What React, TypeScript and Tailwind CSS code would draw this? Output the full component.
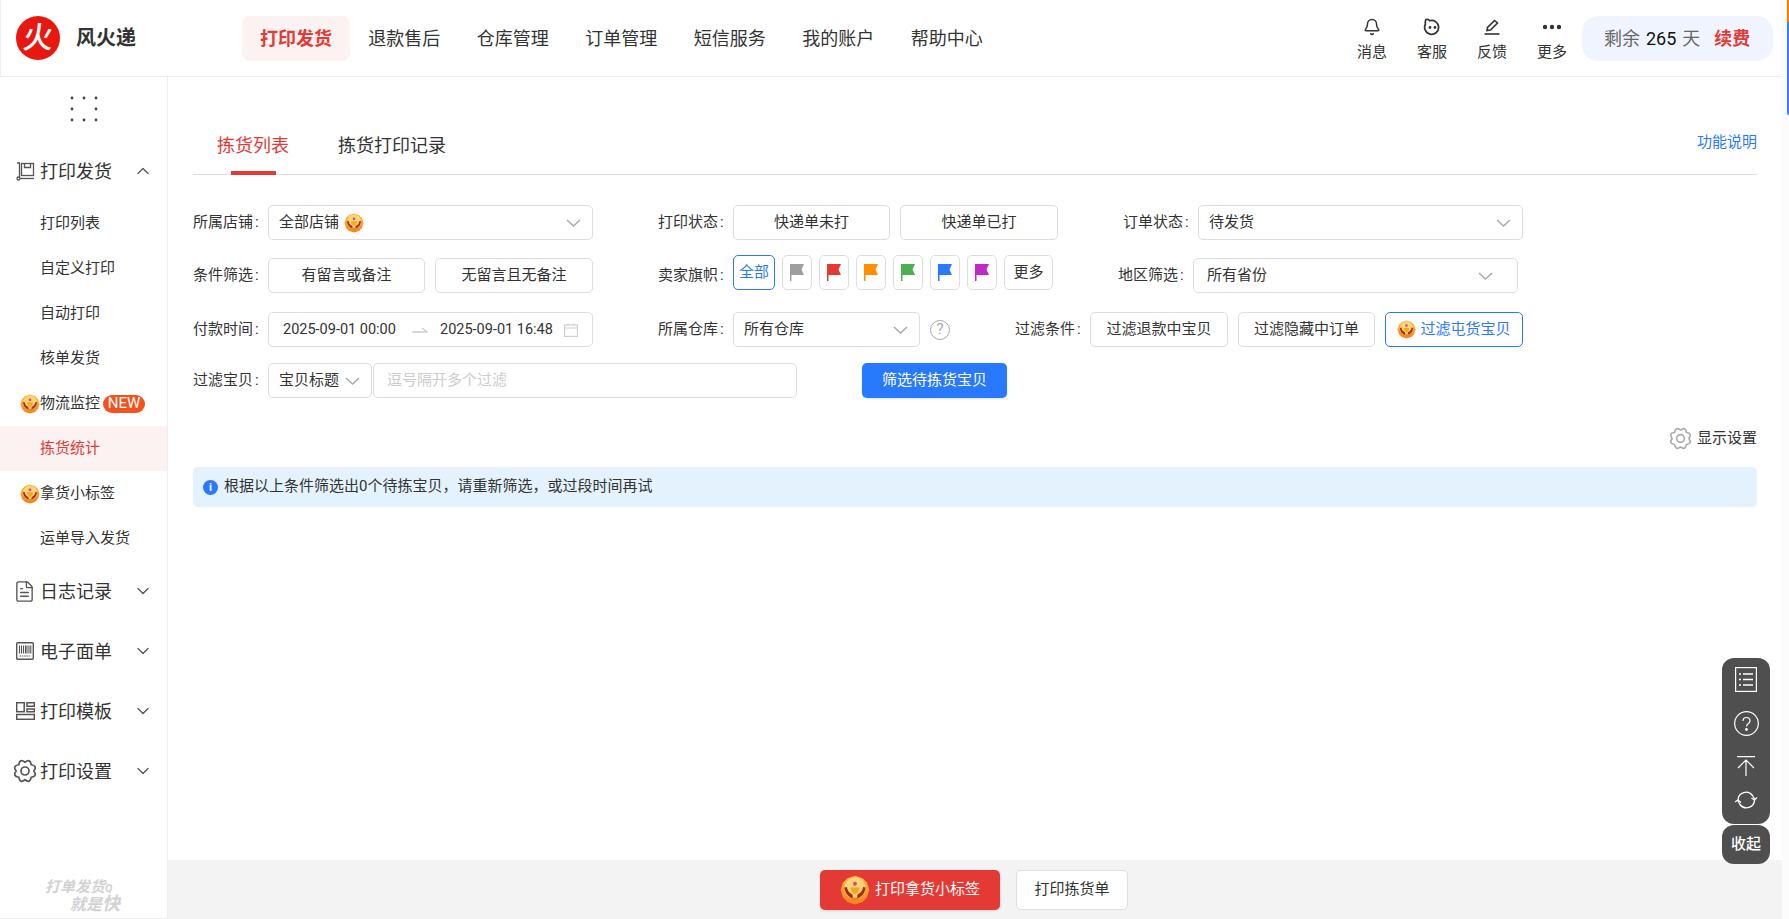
import { Bell, ChevronDown, ChevronUp, FileText } from "lucide-react";

const navItems = ["退款售后", "仓库管理", "订单管理", "短信服务", "我的账户", "帮助中心"];
const flagColors = ["#9e9e9e", "#e53935", "#ff8f00", "#4caf50", "#2979ff", "#c128c8"];

function gearPath(lobes: number, control: number, inner: number) {
  let d = "";
  for (let i = 0; i < lobes; i++) {
    const a0 = (i / lobes) * Math.PI * 2;
    const a1 = ((i + 0.5) / lobes) * Math.PI * 2;
    const a2 = ((i + 1) / lobes) * Math.PI * 2;
    const p = (r: number, a: number) => `${(12 + r * Math.cos(a)).toFixed(2)} ${(12 + r * Math.sin(a)).toFixed(2)}`;
    if (i === 0) d += `M${p(inner, a0)}`;
    d += `Q${p(control, a1)} ${p(inner, a2)}`;
  }
  return d + "Z";
}

function Gear({ size, color }: { size: number; color: string }) {
  return (
    <svg width={size} height={size} viewBox="0 0 24 24" fill="none" stroke={color} strokeWidth="1.700">
      <path d={gearPath(8, 13.800, 8.800)} />
      <circle cx="12" cy="12" r="4" />
    </svg>
  );
}

function Medal({ size }: { size: number }) {
  return (
    <svg width={size} height={size} viewBox="0 0 24 24" className="shrink-0">
      <defs>
        <linearGradient id="medal-bg" x1="0" y1="0" x2="0" y2="1">
          <stop offset="0" stopColor="#f8c04a" />
          <stop offset="1" stopColor="#f5821f" />
        </linearGradient>
      </defs>
      <path d="M12 0.500l6 2 3.500 3.500 2 6-2 6-3.500 3.500-6 2-6-2-3.500-3.500-2-6 2-6L6 2.500z" fill="url(#medal-bg)" />
      <circle cx="12" cy="10.500" r="8.500" fill="#fcd574" />
      <path d="M3.500 10c.5 4.500 3 7.500 7 9l-.5-3.500C7.500 14.500 6 12.500 5.500 9.500z" fill="#a8281c" />
      <path d="M20.500 10c-.5 4.500-3 7.500-7 9l.5-3.500c2.500-1 4-3 4.500-6z" fill="#a8281c" />
      <path d="M8.500 10h7c0 3-1.500 5-3.500 5.500C10 15 8.500 13 8.500 10z" fill="#f5a623" />
      <rect x="9" y="18" width="6" height="2" rx="1" fill="#e8871e" />
      <circle cx="12" cy="7" r="1.600" fill="#e83e8c" />
    </svg>
  );
}

function Chevron({ color = "#aaa" }: { color?: string }) {
  return (
    <svg width="15" height="8" viewBox="0 0 15 8" fill="none" stroke={color} strokeWidth="1.500" className="shrink-0">
      <path d="M1 1l6.500 6L14 1" />
    </svg>
  );
}

function Select({ width, text, pad = "pl-[10px] pr-[11px]", children }: { width: string; text: string; pad?: string; children?: React.ReactNode }) {
  return (
    <div className={`${width} ${pad} flex h-[35px] shrink-0 items-center justify-between rounded-[5px] border border-[#ddd] bg-white`}>
      <span className="flex items-center gap-[5px]">
        {text}
        {children}
      </span>
      <Chevron />
    </div>
  );
}

function Btn({ width, text, active }: { width: string; text: string; active?: boolean }) {
  return (
    <div
      className={`${width} flex h-[35px] shrink-0 items-center justify-center rounded-[5px] border bg-white ${
        active ? "border-[#2979ff] text-[#2979ff]" : "border-[#ddd]"
      }`}
    >
      {text}
    </div>
  );
}

function Label({ text }: { text: string }) {
  return (
    <div className="w-[75px] shrink-0">
      {text}
      <span className="ml-[2px]">:</span>
    </div>
  );
}

function SubItem({ text, medal, active, children }: { text: string; medal?: boolean; active?: boolean; children?: React.ReactNode }) {
  return (
    <div className={`flex h-[45px] items-center text-[15px] ${active ? "bg-[#fdf2f2] text-[#e53935]" : ""} ${medal ? "pl-[20px]" : "pl-[40px]"}`}>
      {medal && <Medal size={20} />}
      <span>{text}</span>
      {children}
    </div>
  );
}

function Group({ icon, text, open }: { icon: React.ReactNode; text: string; open?: boolean }) {
  return (
    <div className="flex h-[60px] items-center pl-[16px] pr-[14px] text-[18px]">
      <div className="flex w-[24px] shrink-0 items-center">{icon}</div>
      <span className="flex-1">{text}</span>
      {open ? <ChevronUp size={20} color="#555" strokeWidth={1.500} /> : <ChevronDown size={20} color="#555" strokeWidth={1.500} />}
    </div>
  );
}

function TopIcon({ icon, text }: { icon: React.ReactNode; text: string }) {
  return (
    <div className="flex w-[60px] flex-col items-center">
      <div className="flex h-[24px] items-center justify-center">{icon}</div>
      <div className="mt-[3px] text-[15px] leading-[20px]">{text}</div>
    </div>
  );
}

export default function App() {
  return (
    <div className="flex h-[919px] w-[1789px] overflow-hidden bg-white font-[Roboto,'Noto_Sans_CJK_SC',sans-serif] text-[15px] text-[#333]">
      <div className="relative flex w-[1782px] flex-col">
        {/* top bar */}
        <header className="flex h-[77px] shrink-0 items-center border-b border-l border-[#eee]">
          <div className="ml-[15px] flex h-[44px] w-[44px] items-center justify-center rounded-full bg-[#e8170f]">
            <span className="-skew-x-6 text-[30px] leading-none font-medium text-white">火</span>
          </div>
          <div className="ml-[16px] w-[166px] text-[20px] font-bold">风火递</div>
          <div className="flex h-[45px] w-[108px] items-center justify-center rounded-[8px] bg-[#fdf2f2] text-[18px] font-bold text-[#e53935]">打印发货</div>
          {navItems.map((n) => (
            <div key={n} className="flex h-[45px] w-[108.500px] items-center justify-center text-[18px]">
              {n}
            </div>
          ))}
          <div className="ml-auto flex items-center pr-[9px]">
            <TopIcon text="消息" icon={<Bell size={18} strokeWidth={2} color="#333" />} />
            <TopIcon
              text="客服"
              icon={
                <svg width="18" height="18" viewBox="0 0 18 18" fill="none" stroke="#333" strokeWidth="1.700">
                  <path d="M3 1.500c2-.5 3 .3 3.500 1.200A7 7 0 1 1 2.500 6C2 4.500 2.200 3 3 1.500z" />
                  <circle cx="7" cy="9.500" r=".6" fill="#333" />
                  <circle cx="12" cy="9.500" r=".6" fill="#333" />
                </svg>
              }
            />
            <TopIcon
              text="反馈"
              icon={
                <svg width="18" height="18" viewBox="0 0 18 18" fill="none" stroke="#333" strokeWidth="1.600">
                  <path d="M4 12.500l.5-3L11.500 2.500 14.500 5 7.500 12z" />
                  <path d="M1.500 16h15" />
                </svg>
              }
            />
            <TopIcon
              text="更多"
              icon={
                <svg width="20" height="6" viewBox="0 0 20 6" fill="#333">
                  <circle cx="3" cy="3" r="2.200" />
                  <circle cx="10" cy="3" r="2.200" />
                  <circle cx="17" cy="3" r="2.200" />
                </svg>
              }
            />
            <div className="flex h-[45px] w-[191px] items-center rounded-[16px] bg-[#f0f4ff] pl-[22px] text-[18px] text-[#666]">
              <span>剩余</span>
              <span className="ml-[6px] text-[#111]">265</span>
              <span className="ml-[6px]">天</span>
              <span className="ml-[14px] font-bold text-[#e53935]">续费</span>
            </div>
          </div>
        </header>

        <div className="flex min-h-0 flex-1">
          {/* side menu */}
          <aside className="flex w-[168px] shrink-0 flex-col border-r border-b border-[#eee]">
            <div className="flex h-[64px] shrink-0 items-center justify-center">
              <svg width="28" height="26" viewBox="0 0 28 26" fill="#444">
                {[[2, 2], [14, 2], [26, 2], [2, 13], [26, 13], [2, 24], [14, 24], [26, 24]].map(([x, y]) => (
                  <circle key={`${x}-${y}`} cx={x} cy={y} r="1.400" />
                ))}
              </svg>
            </div>
            <Group
              open
              text="打印发货"
              icon={
                <svg width="19" height="19" viewBox="0 0 19 19" fill="none" stroke="#555" strokeWidth="1.300">
                  <path d="M1 1h2.500v14.500" />
                  <rect x="5.500" y="1.500" width="12" height="12" />
                  <path d="M8.500 1.500v4h6v-4" />
                  <circle cx="2.500" cy="16.500" r="1.500" />
                  <path d="M4 16.500h14" />
                </svg>
              }
            />
            <SubItem text="打印列表" />
            <SubItem text="自定义打印" />
            <SubItem text="自动打印" />
            <SubItem text="核单发货" />
            <SubItem text="物流监控" medal>
              <span className="ml-[3px] flex h-[18px] w-[42px] items-center justify-center rounded-full bg-[#f4511e] text-[15px] text-white">NEW</span>
            </SubItem>
            <SubItem text="拣货统计" active />
            <SubItem text="拿货小标签" medal />
            <SubItem text="运单导入发货" />
            <Group text="日志记录" icon={<FileText size={23} color="#555" strokeWidth={1.400} className="-ml-[3px] shrink-0" />} />
            <Group
              text="电子面单"
              icon={
                <svg width="18" height="18" viewBox="0 0 18 18" fill="none" stroke="#555" strokeWidth="1.400">
                  <rect x=".7" y=".7" width="16.600" height="16.600" rx="1" />
                  <path d="M3.500 3.500v8M5.500 3.500v8M7.500 3.500v8M9.500 3.500v8M11 3.500v8M13 3.500v8M14.800 3.500v8" strokeWidth="1.100" />
                  <path d="M3.500 14h11" strokeWidth="1" strokeDasharray="1.500 .8" />
                </svg>
              }
            />
            <Group
              text="打印模板"
              icon={
                <svg width="19" height="18" viewBox="0 0 19 18" fill="none" stroke="#555" strokeWidth="1.500">
                  <rect x=".7" y=".7" width="7.500" height="9" />
                  <path d="M11 .7h7.300v3.500H11zM11 7h7.300v2.700H11z" />
                  <rect x=".7" y="12.500" width="17.600" height="4.800" />
                </svg>
              }
            />
            <Group text="打印设置" icon={<div className="-ml-[3px]"><Gear size={24} color="#555" /></div>} />
            <div className="mt-auto mb-[6px] ml-[45px] text-[15px] leading-[15px] font-bold text-[#d2d2d2] italic">
              <div>打单发货<span className="text-[11px]">Q</span></div>
              <div className="ml-[25px] text-[16px]">就是<span className="text-[18px]">快</span></div>
            </div>
          </aside>

          <div className="flex min-w-0 flex-1 flex-col">
            <main className="flex-1 px-[25px] pt-[40px]">
              {/* tabs */}
              <div className="flex h-[58px] border-b border-[#ddd] pl-[24px]">
                <div className="flex h-[58px] flex-col items-center text-[18px] text-[#e53935]">
                  <div className="flex h-[54px] items-center pt-[2px]">拣货列表</div>
                  <div className="h-[4px] w-[45px] bg-[#e53935]" />
                </div>
                <div className="ml-[49px] flex h-[54px] items-center pt-[2px] text-[18px]">拣货打印记录</div>
                <div className="ml-auto flex h-[50px] items-center text-[#2979ff]">功能说明</div>
              </div>

              {/* filters */}
              <div className="mt-[30px] flex h-[35px] items-center">
                <Label text="所属店铺" />
                <Select width="w-[325px]" text="全部店铺">
                  <Medal size={20} />
                </Select>
                <div className="w-[65px] shrink-0" />
                <Label text="打印状态" />
                <Btn width="w-[157px]" text="快递单未打" />
                <div className="w-[10px] shrink-0" />
                <Btn width="w-[158px]" text="快递单已打" />
                <div className="w-[65px] shrink-0" />
                <Label text="订单状态" />
                <Select width="w-[325px]" text="待发货" />
              </div>

              <div className="mt-[18px] flex h-[35px] items-center">
                <Label text="条件筛选" />
                <Btn width="w-[157px]" text="有留言或备注" />
                <div className="w-[10px] shrink-0" />
                <Btn width="w-[158px]" text="无留言且无备注" />
                <div className="w-[65px] shrink-0" />
                <Label text="卖家旗帜" />
                <div className="flex -translate-y-[3px] gap-[7px]">
                  <Btn width="w-[42px]" text="全部" active />
                  {flagColors.map((c) => (
                    <div key={c} className="flex h-[35px] w-[30px] items-center justify-center rounded-[5px] border border-[#ddd]">
                      <svg width="14" height="17" viewBox="0 0 14 17" fill={c}>
                        <path d="M0 0h14l-2.500 5.500L14 11H1.500v6H0z" />
                      </svg>
                    </div>
                  ))}
                  <Btn width="w-[49px]" text="更多" />
                </div>
                <div className="w-[65px] shrink-0" />
                <Label text="地区筛选" />
                <Select width="w-[325px]" text="所有省份" pad="pl-[13px] pr-[24px]" />
              </div>

              <div className="mt-[19px] flex h-[35px] items-center">
                <Label text="付款时间" />
                <div className="flex h-[35px] w-[325px] shrink-0 items-center rounded-[5px] border border-[#ddd] pl-[14px] text-[14.500px]">
                  <span className="w-[129px] shrink-0">2025-09-01 00:00</span>
                  <svg width="16" height="6" viewBox="0 0 16 6" fill="none" stroke="#ccc" strokeWidth="1.300" className="shrink-0">
                    <path d="M0 5h15L10 1" />
                  </svg>
                  <span className="ml-[12px] w-[124px] shrink-0">2025-09-01 16:48</span>
                  <svg width="14" height="14" viewBox="0 0 14 14" fill="none" stroke="#ccc" strokeWidth="1.100" className="shrink-0">
                    <rect x=".6" y="2" width="12.800" height="11.400" />
                    <path d="M.6 5h12.800M4 .5v2M10 .5v2" />
                  </svg>
                </div>
                <div className="w-[65px] shrink-0" />
                <Label text="所属仓库" />
                <Select width="w-[187px]" text="所有仓库" />
                <div className="ml-[10px] flex h-[20px] w-[20px] shrink-0 items-center justify-center rounded-full border-[1.500px] border-[#aaa] text-[15px] text-[#aaa]">?</div>
                <div className="w-[65px] shrink-0" />
                <Label text="过滤条件" />
                <Btn width="w-[138px]" text="过滤退款中宝贝" />
                <div className="w-[10px] shrink-0" />
                <Btn width="w-[137px]" text="过滤隐藏中订单" />
                <div className="w-[10px] shrink-0" />
                <div className="flex h-[35px] w-[138px] shrink-0 items-center justify-center gap-[4px] rounded-[5px] border border-[#2979ff] text-[#2979ff]">
                  <Medal size={19} />
                  过滤屯货宝贝
                </div>
              </div>

              <div className="mt-[16px] flex h-[35px] items-center">
                <Label text="过滤宝贝" />
                <Select width="w-[104px]" text="宝贝标题" />
                <div className="ml-[1px] flex h-[35px] w-[424px] shrink-0 items-center rounded-[5px] border border-[#ddd] pl-[13px] text-[#ccc]">逗号隔开多个过滤</div>
                <div className="ml-[65px] flex h-[35px] w-[145px] shrink-0 items-center justify-center rounded-[5px] bg-[#2979ff] text-white shadow-sm">筛选待拣货宝贝</div>
              </div>

              <div className="mt-[30px] flex h-[20px] items-center justify-end gap-[5px]">
                <Gear size={23} color="#aaa" />
                <span>显示设置</span>
              </div>

              <div className="mt-[19px] flex h-[40px] items-center rounded-[5px] bg-[#e3f2fd] pl-[10px]">
                <div className="flex h-[15px] w-[15px] items-center justify-center rounded-full bg-[#2979ff] text-[11px] leading-none font-bold text-white">i</div>
                <span className="ml-[6px] pb-[2px]">根据以上条件筛选出0个待拣宝贝，请重新筛选，或过段时间再试</span>
              </div>
            </main>

            {/* bottom actions */}
            <footer className="flex h-[59px] shrink-0 items-center justify-center gap-[16px] bg-[#f3f3f3] pr-[2px]">
              <div className="flex h-[40px] w-[180px] items-center justify-center gap-[5px] rounded-[5px] bg-[#e53935] text-white shadow-sm">
                <Medal size={30} />
                打印拿货小标签
              </div>
              <div className="flex h-[40px] w-[112px] items-center justify-center rounded-[5px] border border-[#ddd] bg-white">打印拣货单</div>
            </footer>
          </div>
        </div>

        {/* floating tools */}
        <div className="absolute top-[658px] right-[12px] flex w-[48px] flex-col gap-px">
          <div className="flex h-[166px] flex-col items-center rounded-[12px] bg-[#4f4f4f] pt-[9px]">
            <svg width="22" height="25" viewBox="0 0 22 25" fill="none" stroke="#fff" strokeWidth="1.200">
              <rect x=".6" y=".6" width="20.800" height="23.800" />
              <path d="M8 7h10M8 12.500h10M8 18h10M4 7h2M4 12.500h2M4 18h2" strokeWidth="1.600" />
            </svg>
            <svg width="25" height="25" viewBox="0 0 25 25" fill="none" stroke="#fff" strokeWidth="1.200" className="mt-[19px]">
              <circle cx="12.500" cy="12.500" r="11.800" />
              <path d="M9 10c0-2 1.500-3.500 3.500-3.500S16 8 16 10c0 2.500-3.500 2.500-3.500 5.500" />
              <circle cx="12.500" cy="18.500" r=".8" fill="#fff" />
            </svg>
            <svg width="18" height="20" viewBox="0 0 18 20" fill="none" stroke="#fff" strokeWidth="1.200" className="mt-[20px]">
              <path d="M0 .7h18M9 20V4M1 12l8-8 8 8" />
            </svg>
            <svg width="24" height="20" viewBox="0 0 24 20" fill="none" stroke="#fff" strokeWidth="1.300" className="mt-[14px]">
              <path d="M4 10a8 8 0 0 1 14.500-4.500L20.500 9" />
              <path d="M20.500 10a8 8 0 0 1-14.500 4.500L4 11" />
              <path d="M17.500 8l3 2 2.500-2.500M1 12l3-2 3 2.500" />
            </svg>
          </div>
          <div className="flex h-[39px] items-center justify-center rounded-[12px] bg-[#4f4f4f] font-medium text-white">收起</div>
        </div>
      </div>

      {/* page scroll strip */}
      <div className="flex w-[7px] shrink-0 flex-col items-end bg-[#fcfcfc]">
        <div className="h-[22px] w-[2px] bg-[#ff7a00]" />
        <div className="h-[93px] w-[2px] rounded-bl-sm bg-[#3b7bff]" />
      </div>
    </div>
  );
}
